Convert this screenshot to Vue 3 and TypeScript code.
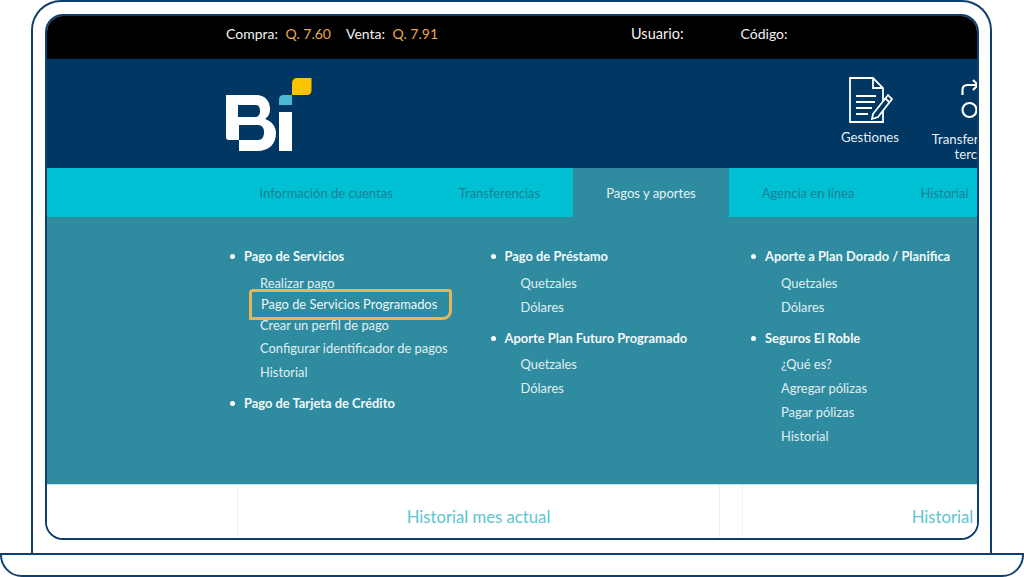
<script setup lang="ts">
interface MenuGroup {
  title: string
  items: string[]
}

const tabs = ['Información de cuentas', 'Transferencias', 'Pagos y aportes', 'Agencia en línea', 'Historial']

const columns: MenuGroup[][] = [
  [
    {
      title: 'Pago de Servicios',
      items: ['Realizar pago', 'Pago de Servicios Programados', 'Crear un perfil de pago', 'Configurar identificador de pagos', 'Historial'],
    },
    { title: 'Pago de Tarjeta de Crédito', items: [] },
  ],
  [
    { title: 'Pago de Préstamo', items: ['Quetzales', 'Dólares'] },
    { title: 'Aporte Plan Futuro Programado', items: ['Quetzales', 'Dólares'] },
  ],
  [
    { title: 'Aporte a Plan Dorado / Planifica', items: ['Quetzales', 'Dólares'] },
    { title: 'Seguros El Roble', items: ['¿Qué es?', 'Agregar pólizas', 'Pagar pólizas', 'Historial'] },
  ],
]

const highlighted = 'Pago de Servicios Programados'
</script>

<template>
  <div class="page">
    <div class="laptop">
      <div class="screen">
        <div class="topbar">
          <span class="rate">Compra: <b>Q. 7.60</b></span>
          <span class="rate">Venta: <b>Q. 7.91</b></span>
          <span class="user">Usuario:</span>
          <span class="code">Código:</span>
        </div>

        <header class="brand">
          <svg class="logo" width="88" height="76" viewBox="0 0 88 76">
            <path
              fill="#fff"
              fill-rule="evenodd"
              d="M0 17H30C40 17 44 24 44 31C44 36 42 39 39 41C46 43 50 49 50 55C50 66 43 73 31 73H13V62H3C1 62 0 61 0 59ZM12 27V39H29C32 39 34 37 34 33C34 30 33 27 30 27ZM13 47V62H32C36 62 38 59 38 54C38 50 36 47 32 47Z"
            />
            <rect x="53" y="34" width="13" height="39" fill="#fff" />
            <path d="M53 21C53 19 55 17 57 17H66V27H53Z" fill="#4cb8d6" />
            <path d="M66 6C66 2 68 0 71 0H85.500V12C85.500 15 84 17 81 17H66Z" fill="#fcc400" />
          </svg>
          <div class="shortcuts">
            <div class="shortcut gestiones">
              <svg width="46" height="46" viewBox="0 0 46 46" fill="none" stroke="#fff" stroke-width="1.800">
                <path d="M34 18V45H1V1H24L34 11V18M24 1V11H34" />
                <path d="M7 19H27M7 25H26M7 31H23M7 37H19" />
                <path d="M24 37L39 18L43 22L29 40L23 42Z" fill="#003763" />
                <path d="M36 21L40 25" />
              </svg>
              <span>Gestiones</span>
            </div>
            <div class="shortcut transfer">
              <svg width="46" height="46" viewBox="0 0 46 46" fill="none" stroke="#fff" stroke-width="2.200">
                <path d="M3.500 18V13C3.500 10 5.500 8 8.500 8H19" />
                <path d="M14 3L19 8L14 13" />
                <circle cx="10.500" cy="33" r="7" />
              </svg>
              <span>Transferencias a<br />terceros</span>
            </div>
          </div>
        </header>

        <nav class="tabs">
          <a v-for="tab in tabs" :key="tab" class="tab" :class="{ active: tab === 'Pagos y aportes' }">{{ tab }}</a>
        </nav>

        <section class="menu">
          <div v-for="(col, i) in columns" :key="i" class="column">
            <div v-for="group in col" :key="group.title" class="group">
              <h4>{{ group.title }}</h4>
              <ul :class="{ tight: group.title === 'Pago de Servicios' }">
                <li v-for="item in group.items" :key="item">
                  <span :class="{ mark: item === highlighted }">{{ item }}</span>
                </li>
              </ul>
            </div>
          </div>
        </section>

        <section class="cards">
          <div class="card">Historial mes actual</div>
          <div class="card">Historial mes actual</div>
        </section>
      </div>
    </div>
    <div class="base"></div>
  </div>
</template>

<style>
html,
body {
  margin: 0;
  background: #fff;
}
</style>

<style scoped>
.page {
  width: 1024px;
  height: 577px;
  overflow: hidden;
  font-family: Lato, "Open Sans", sans-serif;
}

.laptop {
  box-sizing: border-box;
  width: 961px;
  height: 553px;
  margin-left: 31px;
  padding: 12px 11px 13px 12px;
  border: 2px solid #0f3f6e;
  border-bottom: none;
  border-radius: 30px 30px 0 0;
}

.base {
  box-sizing: border-box;
  height: 24px;
  border: 2px solid #0f3f6e;
  border-radius: 0 0 22px 22px;
}

.screen {
  box-sizing: border-box;
  height: 100%;
  overflow: hidden;
  border: 2px solid #0f3f6e;
  border-radius: 18px;
  display: flex;
  flex-direction: column;
}

.topbar {
  flex: 0 0 43px;
  box-sizing: border-box;
  display: flex;
  align-items: center;
  padding: 0 0 9px 179px;
  background: #000;
  color: #f2f2f2;
  font-size: 14px;
  white-space: nowrap;
}

.rate b {
  margin-left: 4px;
  font-weight: 400;
  color: #eea94a;
}

.rate + .rate {
  margin-left: 15px;
}

.user {
  margin-left: 193px;
  font-size: 14.500px;
}

.code {
  margin-left: 57px;
}

.brand {
  flex: 0 0 109px;
  display: flex;
  padding-left: 178.500px;
  background: #003763;
}

.logo {
  flex: none;
  margin-top: 19px;
}

.shortcuts {
  display: flex;
  flex: none;
  margin-left: 526.500px;
  padding-top: 18px;
}

.shortcut {
  flex: none;
  color: #e8eef3;
  font-size: 13.200px;
  line-height: 15px;
  text-align: center;
  white-space: nowrap;
}

.shortcut svg {
  display: block;
}

.gestiones {
  width: 60px;
}

.gestiones svg {
  margin: 0 0 7px 9px;
}

.transfer {
  margin-left: 30px;
  width: 96px;
}

.transfer svg {
  margin: 0 0 9px 29px;
}

.tabs {
  flex: 0 0 49px;
  display: flex;
  padding-left: 179.500px;
  background: #00c1d4;
  white-space: nowrap;
}

.tab {
  padding: 1px 33px 0;
  color: #1a7f96;
  font-size: 13px;
  line-height: 48px;
}

.tab.active {
  background: #2f8ba0;
  color: #e6f3f6;
}

.menu {
  flex: 0 0 268px;
  display: flex;
  box-sizing: border-box;
  padding: 31px 0 0 183px;
  background: #2f8ba0;
  border-bottom: 1px solid #b5e6ea;
}

.column {
  flex: 0 0 260.500px;
}

.group {
  margin-bottom: 11px;
}

h4 {
  position: relative;
  margin: 0 0 7px;
  padding-left: 14px;
  color: #f4f9fa;
  font-size: 12.900px;
  font-weight: 700;
  line-height: 16px;
}

.group + .group h4 {
  margin-bottom: 6px;
}

h4::before {
  content: "";
  position: absolute;
  left: 0;
  top: 6px;
  width: 5px;
  height: 5px;
  border-radius: 50%;
  background: #fff;
}

ul {
  margin: 0;
  padding: 0 0 0 30px;
  list-style: none;
  color: #e1eff2;
  font-size: 12.900px;
}

li {
  display: flow-root;
  height: 24px;
  line-height: 24px;
  white-space: nowrap;
}

.tight {
  margin-top: 8.500px;
}

.tight li:nth-child(-n + 3) {
  height: 21px;
  line-height: 21px;
}

.mark {
  position: relative;
  z-index: 1;
  display: block;
  box-sizing: border-box;
  width: 203px;
  height: 31px;
  margin: -5px 0 -5px -11px;
  padding-left: 9px;
  line-height: 25px;
  background: #2f8ba0;
  border: 3px solid #e3b75c;
  border-radius: 4px 3px 9px 0;
  color: #eef7f8;
}

.cards {
  flex: 1;
  display: flex;
  gap: 22px;
  padding-left: 190px;
  background: #fff;
}

.card {
  flex: 0 0 483px;
  box-sizing: border-box;
  border: 1px solid #eef0f1;
  border-width: 0 1px;
  padding-top: 22px;
  text-align: center;
  color: #5cc5d3;
  font-size: 16.700px;
  line-height: 20px;
}
</style>
